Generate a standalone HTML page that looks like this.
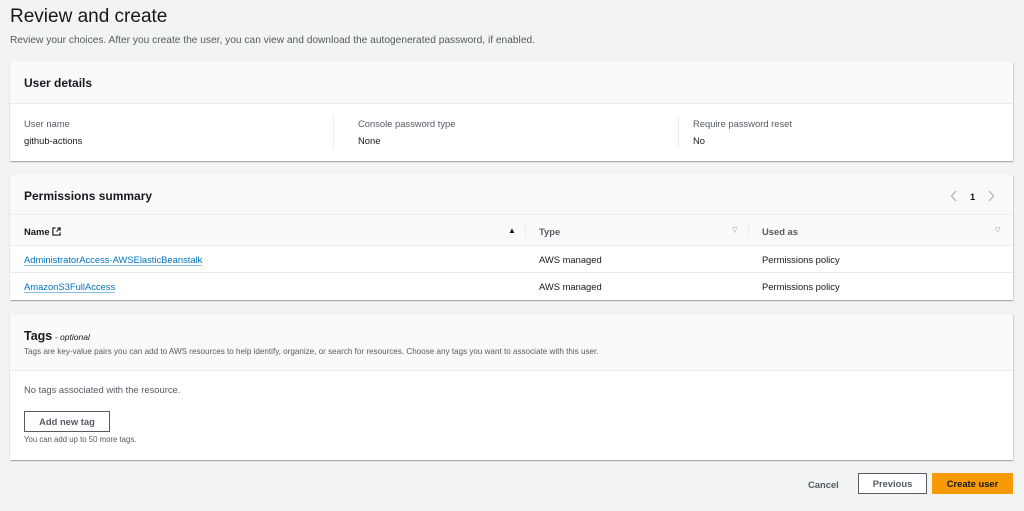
<!DOCTYPE html>
<html><head><style>
*{box-sizing:border-box;margin:0;padding:0}
body{width:1024px;height:511px;background:#f2f3f3;font-family:"Liberation Sans",sans-serif;color:#16191f;position:relative;overflow:hidden;font-size:9.4px}
.a{position:absolute}
.card{position:absolute;left:10px;width:1003px;background:#fff;box-shadow:0 1px 1px rgba(0,28,36,.3),1px 1px 1px rgba(0,28,36,.1);}
.hd{background:#fafafa;border-bottom:1px solid #eaeded}
h2{font-size:12px;font-weight:bold}
.lab{color:#545b64}
a{color:#0073bb;text-decoration:none;border-bottom:1px solid #8cc1e4}
.row{position:absolute;left:0;width:1003px;border-top:1px solid #eaeded}
.btn{position:absolute;font-weight:bold;font-size:9.4px;text-align:center;line-height:19px;height:21px}
</style></head><body>
<div class="a" style="left:10px;top:6px;font-size:19px;">Review and create</div>
<div class="a lab" style="left:10px;top:35px;font-size:10.2px;color:#545b64">Review your choices. After you create the user, you can view and download the autogenerated password, if enabled.</div>

<div class="card" style="top:62px;height:99px">
 <div class="hd" style="height:42px;position:relative"><h2 class="a" style="left:14px;top:14px">User details</h2></div>
 <div class="a lab" style="left:14px;top:56px">User name</div><div class="a" style="left:14px;top:73px">github-actions</div>
 <div class="a" style="left:323px;top:54px;width:1px;height:32px;background:#eaeded"></div>
 <div class="a lab" style="left:348px;top:56px">Console password type</div><div class="a" style="left:348px;top:73px">None</div>
 <div class="a" style="left:668px;top:54px;width:1px;height:32px;background:#eaeded"></div>
 <div class="a lab" style="left:683px;top:56px">Require password reset</div><div class="a" style="left:683px;top:73px">No</div>
</div>

<div class="card" style="top:175px;height:125px">
 <div class="hd" style="height:40px;position:relative"><h2 class="a" style="left:14px;top:14px">Permissions summary</h2>
  <svg class="a" style="left:940px;top:15px" width="8" height="12" viewBox="0 0 8 12"><path d="M6 1L1.5 6 6 11" fill="none" stroke="#aab7b8" stroke-width="1.3"/></svg>
  <div class="a" style="left:960px;top:16px;font-weight:bold">1</div>
  <svg class="a" style="left:977px;top:15px" width="8" height="12" viewBox="0 0 8 12"><path d="M2 1L6.5 6 2 11" fill="none" stroke="#aab7b8" stroke-width="1.3"/></svg></div>
 <div class="a" style="left:0;top:40px;width:1003px;height:30px;background:#fafafa"></div>
 <div class="a" style="left:14px;top:51px;font-weight:bold">Name <svg width="9" height="9" viewBox="0 0 10 10" style="vertical-align:-1px"><path d="M4 1H1v8h8V6M6 1h3v3M9 1L5 5" fill="none" stroke="#16191f" stroke-width="1.3"/></svg></div>
 <div class="a" style="left:498px;top:51px;font-size:8px">&#9650;</div>
 <div class="a" style="left:515px;top:47px;width:1px;height:16px;background:#eaeded"></div>
 <div class="a" style="left:529px;top:51px;font-weight:bold;color:#545b64">Type</div>
 <div class="a" style="left:722px;top:51px;font-size:7px;color:#879596">&#9661;</div>
 <div class="a" style="left:738px;top:47px;width:1px;height:16px;background:#eaeded"></div>
 <div class="a" style="left:752px;top:51px;font-weight:bold;color:#545b64">Used as</div>
 <div class="a" style="left:985px;top:51px;font-size:7px;color:#879596">&#9661;</div>
 <div class="row" style="top:70px;height:27px"><a class="a" style="left:14px;top:8px">AdministratorAccess-AWSElasticBeanstalk</a><span class="a" style="left:529px;top:8px">AWS managed</span><span class="a" style="left:752px;top:8px">Permissions policy</span></div>
 <div class="row" style="top:97px;height:28px"><a class="a" style="left:14px;top:8px">AmazonS3FullAccess</a><span class="a" style="left:529px;top:8px">AWS managed</span><span class="a" style="left:752px;top:8px">Permissions policy</span></div>
</div>

<div class="card" style="top:314px;height:146px">
 <div class="hd" style="height:57px;position:relative">
  <div class="a" style="left:14px;top:15px"><span style="font-size:12.5px;font-weight:bold">Tags</span> <span style="font-style:italic;font-size:8.5px"> - optional</span></div>
  <div class="a" style="left:14px;top:33px;font-size:8.1px;color:#545b64">Tags are key-value pairs you can add to AWS resources to help identify, organize, or search for resources. Choose any tags you want to associate with this user.</div></div>
 <div class="a lab" style="left:14px;top:70px">No tags associated with the resource.</div>
 <div class="btn" style="left:14px;top:97px;width:86px;border:1px solid #545b64;background:#fff;color:#545b64">Add new tag</div>
 <div class="a lab" style="left:14px;top:121px;font-size:7.8px">You can add up to 50 more tags.</div>
</div>

<div class="a" style="left:808px;top:479px;font-weight:bold;color:#545b64">Cancel</div>
<div class="btn" style="left:858px;top:473px;width:69px;border:1px solid #545b64;background:#fff;color:#545b64">Previous</div>
<div class="btn" style="left:932px;top:473px;width:81px;background:#f89a06;border:1px solid #f89a06;color:#16191f">Create user</div>
</body></html>
